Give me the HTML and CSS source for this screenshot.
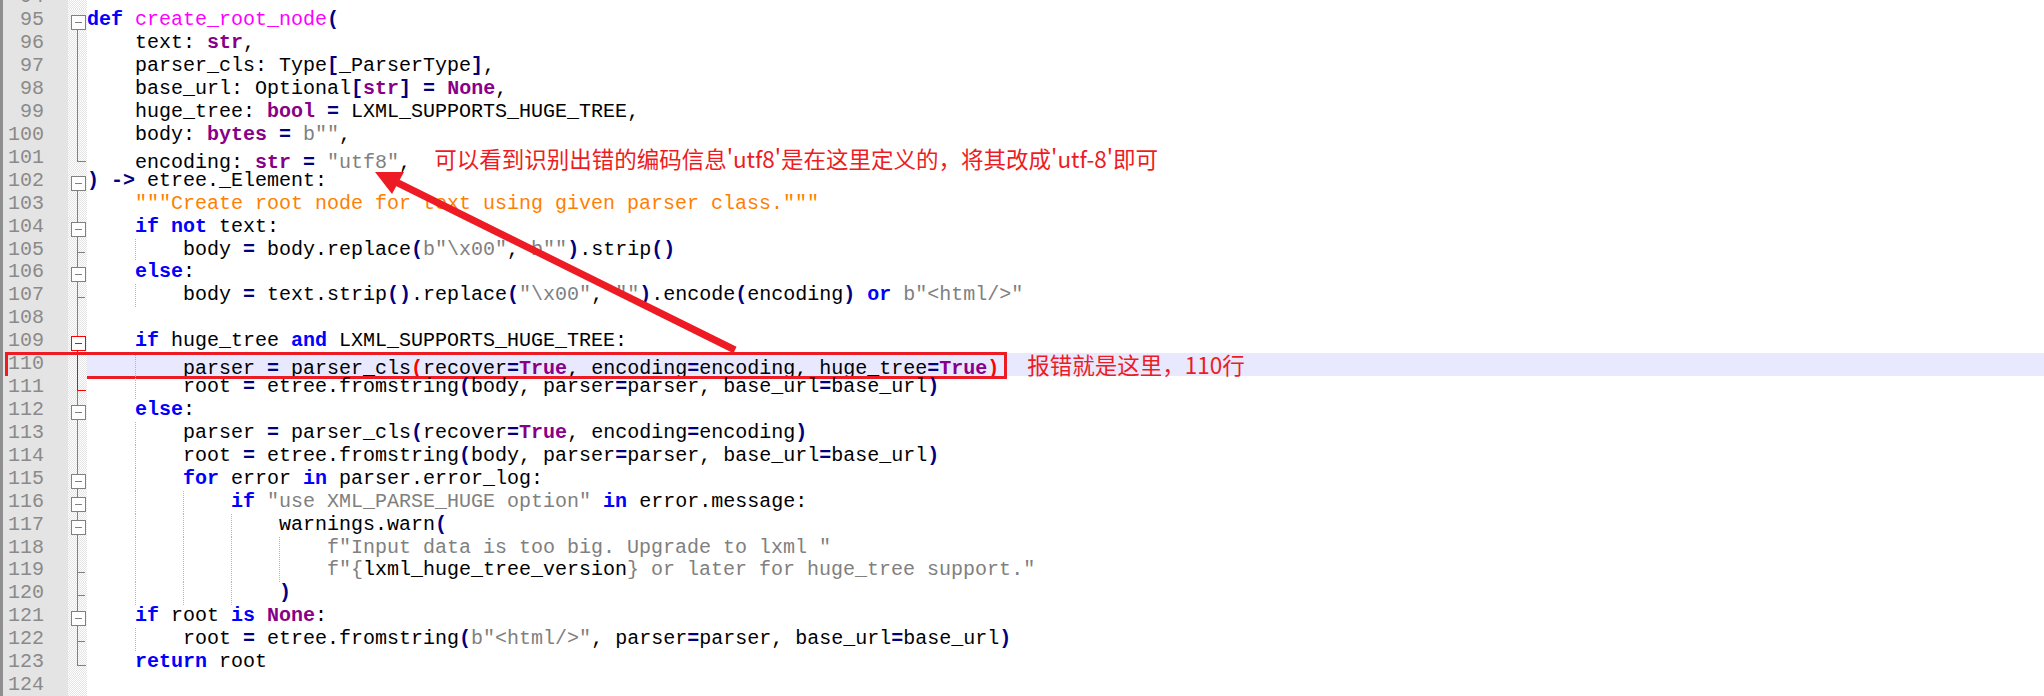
FILE: index.html
```html
<!DOCTYPE html>
<html lang="zh-CN">
<head>
    <meta charset="UTF-8">
    <meta name="viewport" content="width=device-width, initial-scale=1.0">
    <title>create_root_node</title>
    <link rel="stylesheet" href="styles.css">
</head>
<body>
    <div class="page">
        <div class="editor">
            <div class="row"><span class="ln">94</span><span class="fold"></span><span class="code"></span></div>
            <div class="row"><span class="ln">95</span><span class="fold f-box f-first"></span><span class="code"><span class="k">def</span> <span class="f">create_root_node</span><span class="o">(</span></span></div>
            <div class="row"><span class="ln">96</span><span class="fold f-line"></span><span class="code"><span class="ind"></span>text: <span class="t">str</span>,</span></div>
            <div class="row"><span class="ln">97</span><span class="fold f-line"></span><span class="code"><span class="ind"></span>parser_cls: Type<span class="o">[</span>_ParserType<span class="o">]</span>,</span></div>
            <div class="row"><span class="ln">98</span><span class="fold f-line"></span><span class="code"><span class="ind"></span>base_url: Optional<span class="o">[</span><span class="t">str</span><span class="o">]</span> <span class="o">=</span> <span class="t">None</span>,</span></div>
            <div class="row"><span class="ln">99</span><span class="fold f-line"></span><span class="code"><span class="ind"></span>huge_tree: <span class="t">bool</span> <span class="o">=</span> LXML_SUPPORTS_HUGE_TREE,</span></div>
            <div class="row"><span class="ln">100</span><span class="fold f-line"></span><span class="code"><span class="ind"></span>body: <span class="t">bytes</span> <span class="o">=</span> <span class="s">b""</span>,</span></div>
            <div class="row"><span class="ln">101</span><span class="fold f-end"></span><span class="code"><span class="ind"></span>encoding: <span class="t">str</span> <span class="o">=</span> <span class="s">"utf8"</span>,<span class="note note-a">可以看到识别出错的编码信息'utf8'是在这里定义的，将其改成'utf-8'即可</span></span></div>
            <div class="row"><span class="ln">102</span><span class="fold f-box f-first"></span><span class="code"><span class="o">)</span> <span class="o">-&gt;</span> etree._Element:</span></div>
            <div class="row"><span class="ln">103</span><span class="fold f-line"></span><span class="code"><span class="ind"></span><span class="d">"""Create root node for text using given parser class."""</span></span></div>
            <div class="row"><span class="ln">104</span><span class="fold f-box"></span><span class="code"><span class="ind"></span><span class="k">if</span> <span class="k">not</span> text:</span></div>
            <div class="row"><span class="ln">105</span><span class="fold f-tick"></span><span class="code"><span class="ind"></span><span class="ind g"></span>body <span class="o">=</span> body.replace<span class="o">(</span><span class="s">b"\x00"</span>, <span class="s">b""</span><span class="o">)</span>.strip<span class="o">()</span></span></div>
            <div class="row"><span class="ln">106</span><span class="fold f-box"></span><span class="code"><span class="ind"></span><span class="k">else</span>:</span></div>
            <div class="row"><span class="ln">107</span><span class="fold f-tick"></span><span class="code"><span class="ind"></span><span class="ind g"></span>body <span class="o">=</span> text.strip<span class="o">()</span>.replace<span class="o">(</span><span class="s">"\x00"</span>, <span class="s">""</span><span class="o">)</span>.encode<span class="o">(</span>encoding<span class="o">)</span> <span class="k">or</span> <span class="s">b"&lt;html/&gt;"</span></span></div>
            <div class="row"><span class="ln">108</span><span class="fold f-line"></span><span class="code"></span></div>
            <div class="row"><span class="ln">109</span><span class="fold f-box f-red-below"></span><span class="code"><span class="ind"></span><span class="k">if</span> huge_tree <span class="k">and</span> LXML_SUPPORTS_HUGE_TREE:</span></div>
            <div class="row row-current"><span class="ln">110</span><span class="fold f-line f-red"></span><span class="code"><span class="ind"></span><span class="ind g"></span>parser <span class="o">=</span> parser_cls<span class="r">(</span>recover<span class="o">=</span><span class="t">True</span>, encoding<span class="o">=</span>encoding, huge_tree<span class="o">=</span><span class="t">True</span><span class="r">)</span><span class="note note-b">报错就是这里，110行</span></span><span class="mark"></span></div>
            <div class="row"><span class="ln">111</span><span class="fold f-end f-red f-more"></span><span class="code"><span class="ind"></span><span class="ind g"></span>root <span class="o">=</span> etree.fromstring<span class="o">(</span>body, parser<span class="o">=</span>parser, base_url<span class="o">=</span>base_url<span class="o">)</span></span></div>
            <div class="row"><span class="ln">112</span><span class="fold f-box"></span><span class="code"><span class="ind"></span><span class="k">else</span>:</span></div>
            <div class="row"><span class="ln">113</span><span class="fold f-line"></span><span class="code"><span class="ind"></span><span class="ind g"></span>parser <span class="o">=</span> parser_cls<span class="o">(</span>recover<span class="o">=</span><span class="t">True</span>, encoding<span class="o">=</span>encoding<span class="o">)</span></span></div>
            <div class="row"><span class="ln">114</span><span class="fold f-line"></span><span class="code"><span class="ind"></span><span class="ind g"></span>root <span class="o">=</span> etree.fromstring<span class="o">(</span>body, parser<span class="o">=</span>parser, base_url<span class="o">=</span>base_url<span class="o">)</span></span></div>
            <div class="row"><span class="ln">115</span><span class="fold f-box"></span><span class="code"><span class="ind"></span><span class="ind g"></span><span class="k">for</span> error <span class="k">in</span> parser.error_log:</span></div>
            <div class="row"><span class="ln">116</span><span class="fold f-box"></span><span class="code"><span class="ind"></span><span class="ind g"></span><span class="ind g"></span><span class="k">if</span> <span class="s">"use XML_PARSE_HUGE option"</span> <span class="k">in</span> error.message:</span></div>
            <div class="row"><span class="ln">117</span><span class="fold f-box"></span><span class="code"><span class="ind"></span><span class="ind g"></span><span class="ind g"></span><span class="ind g"></span>warnings.warn<span class="o">(</span></span></div>
            <div class="row"><span class="ln">118</span><span class="fold f-line"></span><span class="code"><span class="ind"></span><span class="ind g"></span><span class="ind g"></span><span class="ind g"></span><span class="ind g"></span><span class="s">f"Input data is too big. Upgrade to lxml "</span></span></div>
            <div class="row"><span class="ln">119</span><span class="fold f-tick"></span><span class="code"><span class="ind"></span><span class="ind g"></span><span class="ind g"></span><span class="ind g"></span><span class="ind g"></span><span class="s">f"{</span>lxml_huge_tree_version<span class="s">} or later for huge_tree support."</span></span></div>
            <div class="row"><span class="ln">120</span><span class="fold f-tick"></span><span class="code"><span class="ind"></span><span class="ind g"></span><span class="ind g"></span><span class="ind g"></span><span class="o">)</span></span></div>
            <div class="row"><span class="ln">121</span><span class="fold f-box"></span><span class="code"><span class="ind"></span><span class="k">if</span> root <span class="k">is</span> <span class="t">None</span>:</span></div>
            <div class="row"><span class="ln">122</span><span class="fold f-tick"></span><span class="code"><span class="ind"></span><span class="ind g"></span>root <span class="o">=</span> etree.fromstring<span class="o">(</span><span class="s">b"&lt;html/&gt;"</span>, parser<span class="o">=</span>parser, base_url<span class="o">=</span>base_url<span class="o">)</span></span></div>
            <div class="row"><span class="ln">123</span><span class="fold f-end"></span><span class="code"><span class="ind"></span><span class="k">return</span> root</span></div>
            <div class="row"><span class="ln">124</span><span class="fold"></span><span class="code"></span></div>
        </div>

        <svg class="arrow" width="2044" height="696" viewBox="0 0 2044 696">
            <line x1="396" y1="182" x2="735" y2="350" stroke="#ed1c24" stroke-width="7"/>
            <polygon points="375,172 404,172 392,194" fill="#ed1c24"/>
        </svg>
    </div>
</body>
</html>
```

FILE: styles.css
```css
* {
    box-sizing: border-box;
    margin: 0;
    padding: 0;
}

body {
    background-color: #fff;
    overflow: hidden;
}

.page {
    position: relative;
    width: 2044px;
    height: 696px;
    overflow: hidden;
}

.editor {
    margin-top: -13.6px;
    font-family: "Liberation Mono", "Courier New", monospace;
    font-size: 20px;
    color: #000;
}

.row {
    position: relative;
    display: flex;
    height: 22.93px;
    line-height: 22.93px;
}

.ln {
    width: 68px;
    flex: none;
    padding-right: 24px;
    text-align: right;
    color: #8a8a8a;
    background-color: #e4e4e4;
    border-left: 3px solid #8f8f8f;
}

.fold {
    position: relative;
    width: 19px;
    flex: none;
    background: repeating-conic-gradient(#e4e4e4 0 25%, #fff 0 50%) 0 0 / 2px 2px;
}

.code {
    flex: 1;
    white-space: pre;
}

.row-current .code {
    background-color: #e8e8ff;
}

/* fold margin marks */
.fold::before,
.fold::after {
    position: absolute;
}

.f-line::before {
    content: "";
    left: 9px;
    top: 0;
    bottom: 0;
    border-left: 1px solid #808080;
}

.f-tick::before {
    content: "";
    left: 9px;
    top: 0;
    bottom: 0;
    border-left: 1px solid #808080;
}

.f-tick::after {
    content: "";
    left: 10px;
    top: 13px;
    width: 7px;
    border-top: 1px solid #808080;
}

.f-end::before {
    content: "";
    left: 9px;
    top: 0;
    width: 8px;
    height: 14px;
    border-left: 1px solid #808080;
    border-bottom: 1px solid #808080;
}

.f-box::before {
    content: "";
    left: 9px;
    top: 0;
    bottom: 0;
    width: 1px;
    background-color: #808080;
}

.f-box.f-first::before {
    top: 12px;
}

.f-box::after {
    content: "";
    left: 3px;
    top: 6px;
    width: 13px;
    height: 13px;
    border: 1px solid #808080;
    background: linear-gradient(#808080, #808080) center / 7px 1px no-repeat, #fff;
}

.f-red-below::before {
    background: linear-gradient(#808080 50%, #ff0000 50%);
}

.f-red-below::after {
    border-color: #ff0000;
    background: linear-gradient(#ff0000, #ff0000) center / 7px 1px no-repeat, #fff;
}

.f-red::before,
.f-red::after {
    border-color: #ff0000;
}

.f-more {
    background:
        linear-gradient(#808080, #808080) 9px 13px / 1px 100% no-repeat,
        repeating-conic-gradient(#e4e4e4 0 25%, #fff 0 50%) 0 0 / 2px 2px;
}

/* indentation guides */
.ind {
    display: inline-block;
    width: 48px;
    height: 22.93px;
    vertical-align: top;
}

.ind.g {
    background: repeating-linear-gradient(#b4b4b4 0 1px, transparent 1px 2px) 0 0 / 1px 100% no-repeat;
}

/* syntax colours */
.k {
    color: #0000ff;
    font-weight: bold;
}

.f {
    color: #ff00ff;
}

.t {
    color: #880088;
    font-weight: bold;
}

.o {
    color: #000080;
    font-weight: bold;
}

.r {
    color: #ff0000;
    font-weight: bold;
}

.s {
    color: #808080;
}

.d {
    color: #ff8000;
}

/* annotations */
.note {
    font-family: "Noto Sans CJK SC", sans-serif;
    font-size: 22.5px;
    color: #ed1c24;
    white-space: nowrap;
}

.note-a {
    margin-left: 23px;
}

.note-b {
    margin-left: 28px;
}

.mark {
    position: absolute;
    left: 5px;
    top: -1px;
    width: 1002px;
    height: 27px;
    border: 3px solid #ed1c24;
}

.arrow {
    position: absolute;
    left: 0;
    top: 0;
    pointer-events: none;
}
```
